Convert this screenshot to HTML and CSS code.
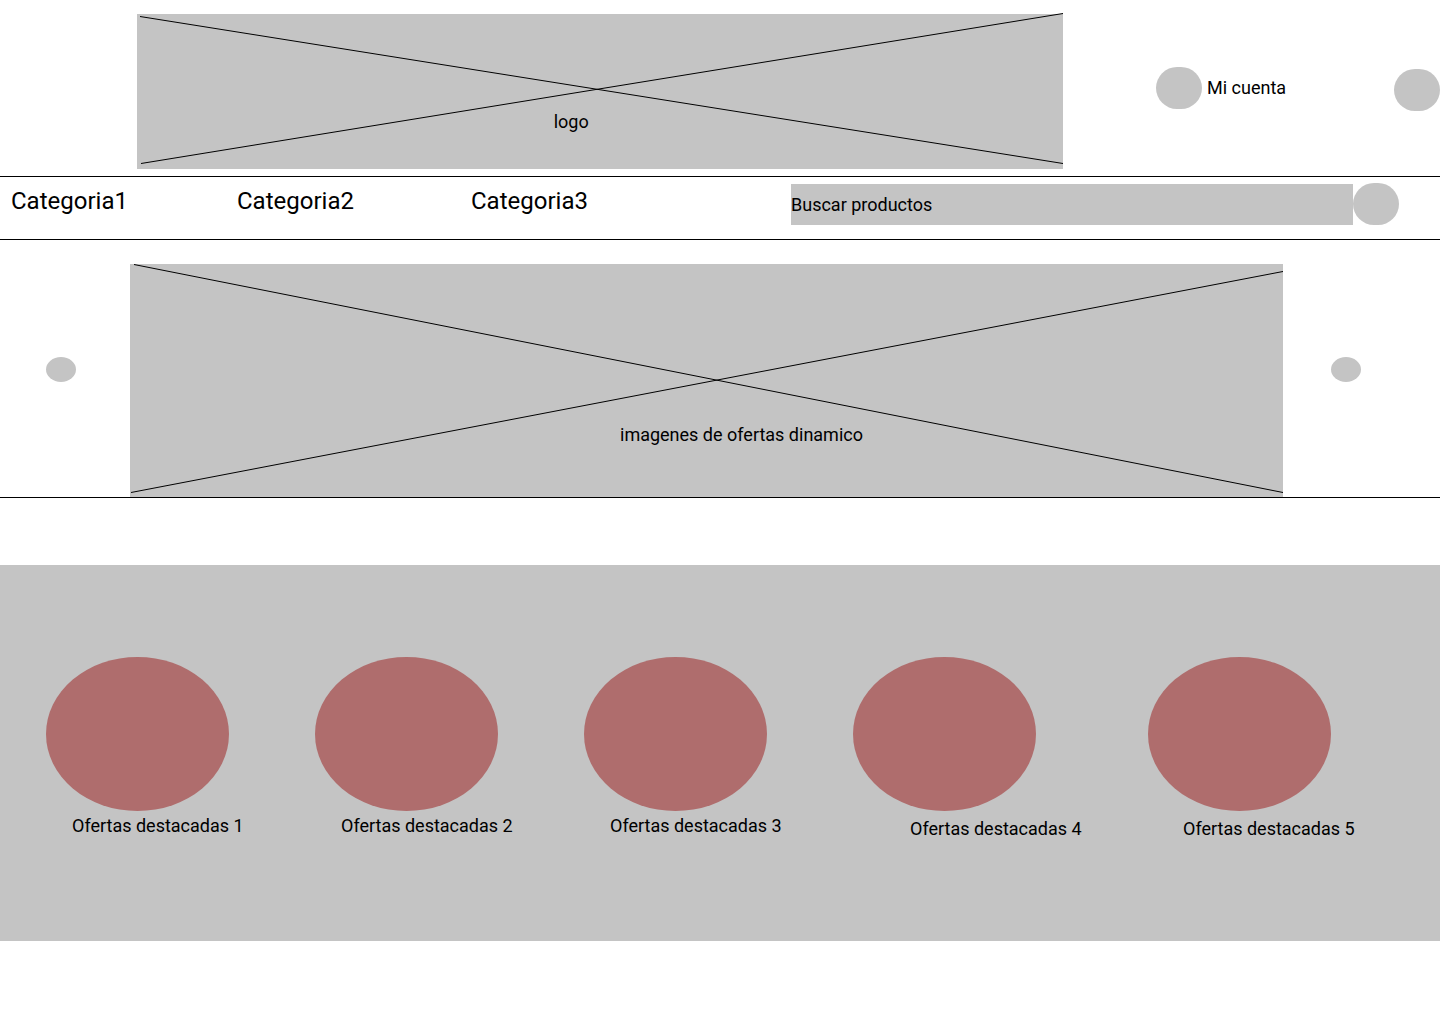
FILE: index.html
```html
<!DOCTYPE html>
<html lang="es">
<head>
  <meta charset="utf-8">
  <meta name="viewport" content="width=device-width, initial-scale=1">
  <title>Tienda</title>
  <link rel="stylesheet" href="styles.css">
</head>
<body>
  <header class="header">
    <div class="placeholder logo">
      <svg class="cross" viewBox="0 0 926 155" preserveAspectRatio="none" aria-hidden="true">
        <path d="M3 2.500L926 149.500M4 149.500L926 -.500"/>
      </svg>
      <span class="logo-text">logo</span>
    </div>
    <a class="account" href="#"><span class="dot"></span>Mi cuenta</a>
    <button class="dot cart" type="button" aria-label="Carrito"></button>
  </header>

  <nav class="nav">
    <a class="category" href="#">Categoria1</a>
    <a class="category" href="#">Categoria2</a>
    <a class="category" href="#">Categoria3</a>
    <form class="search">
      <input class="search-input" type="search" placeholder="Buscar productos" aria-label="Buscar productos">
      <button class="dot" type="submit" aria-label="Buscar"></button>
    </form>
  </nav>

  <main>
    <section class="carousel">
      <button class="arrow" type="button" aria-label="Anterior"></button>
      <div class="placeholder banner">
        <svg class="cross" viewBox="0 0 1153 233" preserveAspectRatio="none" aria-hidden="true">
          <path d="M4 .500L1153 228.500M1 228.500L1153 7.500"/>
        </svg>
        <span class="banner-text">imagenes de ofertas dinamico</span>
      </div>
      <button class="arrow" type="button" aria-label="Siguiente"></button>
    </section>

    <section class="offers">
      <figure class="offer"><div class="offer-image"></div><figcaption class="caption">Ofertas destacadas 1</figcaption></figure>
      <figure class="offer"><div class="offer-image"></div><figcaption class="caption">Ofertas destacadas 2</figcaption></figure>
      <figure class="offer"><div class="offer-image"></div><figcaption class="caption">Ofertas destacadas 3</figcaption></figure>
      <figure class="offer"><div class="offer-image"></div><figcaption class="caption caption-far">Ofertas destacadas 4</figcaption></figure>
      <figure class="offer"><div class="offer-image"></div><figcaption class="caption caption-low">Ofertas destacadas 5</figcaption></figure>
    </section>
  </main>
</body>
</html>
```
FILE: styles.css
```css
* {
  box-sizing: border-box;
}

body {
  margin: 0;
  background: #fff;
  color: #000;
  font-family: Roboto, "Liberation Sans", sans-serif;
  font-size: 18px;
  line-height: 22px;
}

a {
  color: inherit;
  text-decoration: none;
}

button {
  padding: 0;
  border: 0;
  cursor: pointer;
}

.placeholder {
  position: relative;
  background: #c4c4c4;
}

.cross {
  position: absolute;
  inset: 0;
  width: 100%;
  height: 100%;
  overflow: visible;
}

.cross path {
  fill: none;
  stroke: #000;
  stroke-width: 1px;
  vector-effect: non-scaling-stroke;
}

.dot {
  flex: none;
  width: 46px;
  height: 42px;
  border-radius: 21px;
  background: #c4c4c4;
}

.header {
  display: flex;
  align-items: center;
  padding: 14px 0 7px 137px;
  border-bottom: 1px solid #000;
}

.logo {
  flex: 1;
  height: 155px;
  padding-top: 97px;
}

.logo-text {
  display: block;
  margin-left: 45%;
}

.account {
  display: flex;
  align-items: center;
  gap: 5px;
  width: 238px;
  margin: 0 0 8px 93px;
  white-space: nowrap;
}

.cart {
  margin-bottom: 4px;
}

.nav {
  display: grid;
  grid-template-columns: 226fr 234fr 320fr 608fr;
  padding: 6px 41px 14px 11px;
  border-bottom: 1px solid #000;
}

.category {
  font-size: 24px;
  line-height: 36px;
}

.search {
  display: flex;
  align-items: flex-end;
}

.search-input {
  flex: 1;
  min-width: 0;
  height: 41px;
  padding: 0;
  border: 0;
  border-radius: 0;
  background: #c4c4c4;
  color: #000;
  font: inherit;
  appearance: none;
}

.search-input::placeholder {
  color: #000;
  opacity: 1;
}

.carousel {
  display: flex;
  align-items: center;
  padding: 24px 79px 0 46px;
  border-bottom: 1px solid #000;
}

.arrow {
  flex: none;
  width: 30px;
  height: 25px;
  margin-bottom: 22px;
  border-radius: 50%;
  background: #c4c4c4;
}

.banner {
  flex: 1;
  height: 233px;
  margin: 0 48px 0 54px;
  padding-top: 160px;
}

.banner-text {
  display: block;
  margin-left: 42.5%;
}

.offers {
  display: grid;
  grid-template-columns: 269fr 269fr 269fr 295fr 246fr;
  margin: 67px 0 83px;
  padding: 92px 46px 101px;
  background: #c4c4c4;
}

.offer {
  margin: 0;
}

.offer-image {
  width: 183px;
  height: 154px;
  border-radius: 50%;
  background: #af6d6d;
}

.caption {
  padding: 4px 0 0 26px;
  white-space: nowrap;
}

.caption-low {
  padding: 7px 0 0 35px;
}

.caption-far {
  padding: 7px 0 0 57px;
}
```
